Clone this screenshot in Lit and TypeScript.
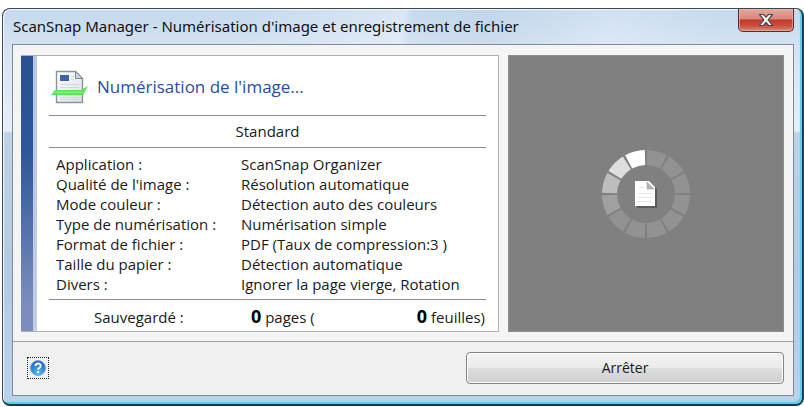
import { LitElement, html, css, svg } from "lit";
import { customElement, property } from "lit/decorators.js";

const settings: Array<[string, string]> = [
  ["Application :", "ScanSnap Organizer"],
  ["Qualité de l'image :", "Résolution automatique"],
  ["Mode couleur :", "Détection auto des couleurs"],
  ["Type de numérisation :", "Numérisation simple"],
  ["Format de fichier :", "PDF (Taux de compression:3 )"],
  ["Taille du papier :", "Détection automatique"],
  ["Divers :", "Ignorer la page vierge, Rotation"],
];

@customElement("scan-spinner")
class ScanSpinner extends LitElement {
  @property({ type: Number }) active = 11;

  static styles = css`
    :host { display: block; }
    svg { display: block; width: 90px; height: 90px; }
  `;

  private segment(index: number) {
    const from = ((index * 30 + 1.6 - 90) * Math.PI) / 180;
    const to = (((index + 1) * 30 - 1.6 - 90) * Math.PI) / 180;
    const at = (r: number, a: number) =>
      `${(45 + r * Math.cos(a)).toFixed(2)} ${(45 + r * Math.sin(a)).toFixed(2)}`;
    const d = `M${at(44, from)}A44 44 0 0 1 ${at(44, to)}L${at(29, to)}A29 29 0 0 0 ${at(29, from)}Z`;
    const tones = ["#ffffff", "#dedede", "#bdbdbd", "#a0a0a0"];
    return svg`<path d=${d} fill=${tones[this.active - index] ?? "#929292"}></path>`;
  }

  render() {
    return html`
      <svg viewBox="0 0 90 90" role="img" aria-label="Numérisation en cours">
        ${Array.from({ length: 12 }, (_, i) => this.segment(i))}
        <path d="M36 34H50L56 40V59H36Z" fill="#5c5c5c"></path>
        <path d="M34 32H48L54 38V57H34Z" fill="#fff"></path>
        <path d="M46 33L53 40H46Z" fill="#b4b4b4" stroke="#a2a2a2" stroke-width=".6"></path>
        <path d="M38 38.500H43M37 44.500H51M37 48.500H51M37 52.500H51" stroke="#e6e6e6"></path>
      </svg>
    `;
  }
}

@customElement("app-root")
class AppRoot extends LitElement {
  static styles = css`
    :host {
      display: flex;
      min-height: 100vh;
      box-sizing: border-box;
      padding: 8px 0 1px 2px;
      background: #fff;
      color: #1a1a1a;
      font: 15px/20px "Open Sans", "Noto Sans", sans-serif;
    }
    * { box-sizing: border-box; }
    .window {
      flex: 1;
      min-width: 0;
      display: flex;
      flex-direction: column;
      padding: 0 8px 8px 9px;
      border: 1px solid #3a4650;
      border-right: 2px solid #1e3e4c;
      border-bottom: 2px solid #143c50;
      border-radius: 8px;
      background:
        linear-gradient(100deg, #ffffff00 30%, #ffffff55 50%, #ffffff00 51%, #b4cbe244 60%, #ffffff33 76%, #ffffff00 90%) top / 100% 36px no-repeat,
        linear-gradient(180deg, #c5d9ed 0, #d5e3f3 40px, #e6eff8 122px, #bed2e6 124px, #b3cbe2 260px, #b9d3ea 100%);
      box-shadow: inset 1px 1px 0 #f2f9ff, inset -2px -2px 1px #57cde9;
    }
    .title-bar {
      height: 35px;
      display: flex;
      justify-content: space-between;
      align-items: flex-start;
    }
    h1 { margin: 0; padding: 7px 0 0 1px; font-family: "Noto Sans", sans-serif; font-size: 15px; line-height: 20px; font-weight: 400; color: #111; white-space: nowrap; }
    button { font: inherit; color: inherit; padding: 0; margin: 0; }
    .close {
      width: 56px;
      height: 23px;
      display: flex;
      align-items: center;
      justify-content: center;
      border: 1px solid #5c2a2a;
      border-top: 0;
      border-radius: 0 0 5px 5px;
      background: linear-gradient(#e3a99f 0, #d8877b 45%, #c0392b 50%, #c74f3a 75%, #dd8b78 100%);
      box-shadow: inset 0 0 0 1px #efb9ae99;
    }
    .client { flex: 1; display: flex; flex-direction: column; border: 1px solid #7f8b97; background: #f4f4f4; }
    .content { flex: 1; display: grid; grid-template-columns: 478fr 276fr; gap: 9px; padding: 10px 9px 9px 8px; }
    .info {
      display: flex;
      flex-direction: column;
      min-width: 0;
      border: 1px solid #b0b0b0;
      border-left: 0;
      background:
        linear-gradient(#27528f 0, #2d5896 35%, #7b8dbd 90%) left / 12px 100% no-repeat,
        linear-gradient(#b8c6e2, #c3cde6) left / 16px 100% no-repeat,
        #fff;
      padding: 0 12px 0 28px;
    }
    .heading { height: 59px; display: flex; align-items: center; gap: 8px; padding: 2px 0 0 2px; }
    h2 { margin: 0; font-size: 17px; line-height: 24px; font-weight: 400; color: #2c4ba6; white-space: nowrap; }
    .profile { border: solid #8c8c8c; border-width: 1px 0; height: 33px; line-height: 31px; text-align: center; margin: 0; }
    table { border-collapse: collapse; margin: 6px 0 5px; width: 100%; table-layout: fixed; }
    th, td { padding: 0; text-align: left; font-weight: 400; white-space: nowrap; }
    th { width: 192px; padding-left: 7px; }
    .saved { border-top: 1px solid #8c8c8c; flex: 1; display: flex; align-items: baseline; padding: 6px 1px 0 45px; white-space: nowrap; }
    .saved-label { width: 157px; }
    .sheets { margin-left: auto; }
    b { font-size: 18px; line-height: 20px; color: #000; }
    .preview { display: flex; align-items: center; justify-content: center; background: #808080; border: 1px solid #8e8e8e; }
    .footer {
      height: 54px;
      display: flex;
      justify-content: space-between;
      align-items: center;
      padding: 0 9px 2px 14px;
      border-top: 1px solid #a0a0a0;
      background: #f0f0f0;
    }
    .help { width: 22px; height: 22px; display: flex; align-items: center; justify-content: center; border: 1px dotted #222; background: none; }
    .stop {
      width: 42%;
      height: 32px;
      font-size: 14px;
      border: 1px solid #858585;
      border-radius: 4px;
      background: linear-gradient(#f3f3f3 0, #ebebeb 48%, #dddddd 52%, #cfcfcf 100%);
      box-shadow: inset 0 0 0 1px #fbfbfb;
    }
    svg { display: block; flex: none; }
  `;

  render() {
    return html`
      <main class="window">
        <header class="title-bar">
          <h1>ScanSnap Manager - Numérisation d'image et enregistrement de fichier</h1>
          <button class="close" aria-label="Fermer">
            <svg width="16" height="14" viewBox="0 0 16 14">
              <path d="M1.500 1.500H5.500L8 4.200L10.500 1.500H14.500L10.200 6.800L14.500 12.500H10.500L8 9.500L5.500 12.500H1.500L5.800 6.800Z"
                fill="#f4f4f4" stroke="#4d4650" stroke-width="1.200" stroke-linejoin="round"></path>
            </svg>
          </button>
        </header>
        <div class="client">
          <div class="content">
            <section class="info">
              <div class="heading">
                <svg width="38" height="34" viewBox="0 0 38 34">
                  <defs>
                    <linearGradient id="sheet" x1="0" y1="0" x2="1" y2="1">
                      <stop offset="0" stop-color="#fff"></stop><stop offset="1" stop-color="#d9dee3"></stop>
                    </linearGradient>
                  </defs>
                  <path d="M5.500 1.500H24.500L31.500 8.500V32.500H5.500Z" fill="url(#sheet)" stroke="#8b949d" stroke-width="1.400"></path>
                  <path d="M24.500 1.500V8.500H31.500Z" fill="#c9d6e4" stroke="#7a8692"></path>
                  <rect x="9" y="5" width="9" height="6" fill="#3d64ab"></rect>
                  <path d="M20 6.500H23M20 9.500H23M9 14.500H28M9 17.500H28M9 27.500H28M9 29.500H28" stroke="#d3d8dd"></path>
                  <path d="M4 20H30L37 16L32 25H0Z" fill="#59e659"></path>
                  <path d="M4 21.500H31L30 23H3Z" fill="#85f07f"></path>
                </svg>
                <h2>Numérisation de l'image...</h2>
              </div>
              <p class="profile">Standard</p>
              <table>
                <tbody>
                  ${settings.map(([name, value]) => html`<tr><th scope="row">${name}</th><td>${value}</td></tr>`)}
                </tbody>
              </table>
              <div class="saved">
                <span class="saved-label">Sauvegardé :</span>
                <span><b>0</b> pages (</span>
                <span class="sheets"><b>0</b> feuilles)</span>
              </div>
            </section>
            <section class="preview"><scan-spinner></scan-spinner></section>
          </div>
          <footer class="footer">
            <button class="help" aria-label="Aide">
              <svg width="16" height="16" viewBox="0 0 16 16">
                <defs>
                  <radialGradient id="ball" cx=".5" cy=".85" r=".8">
                    <stop offset="0" stop-color="#4fc0f4"></stop><stop offset="1" stop-color="#1b62bd"></stop>
                  </radialGradient>
                </defs>
                <circle cx="8" cy="8" r="7.500" fill="url(#ball)" stroke="#76a5d8"></circle>
                <path d="M5.500 6C5.500 2.800 10.700 2.800 10.700 5.700C10.700 7.600 8.100 7.700 8.100 9.700" fill="none" stroke="#fff" stroke-width="1.900"></path>
                <circle cx="8.100" cy="12.100" r="1.200" fill="#fff"></circle>
              </svg>
            </button>
            <button class="stop">Arrêter</button>
          </footer>
        </div>
      </main>
    `;
  }
}
